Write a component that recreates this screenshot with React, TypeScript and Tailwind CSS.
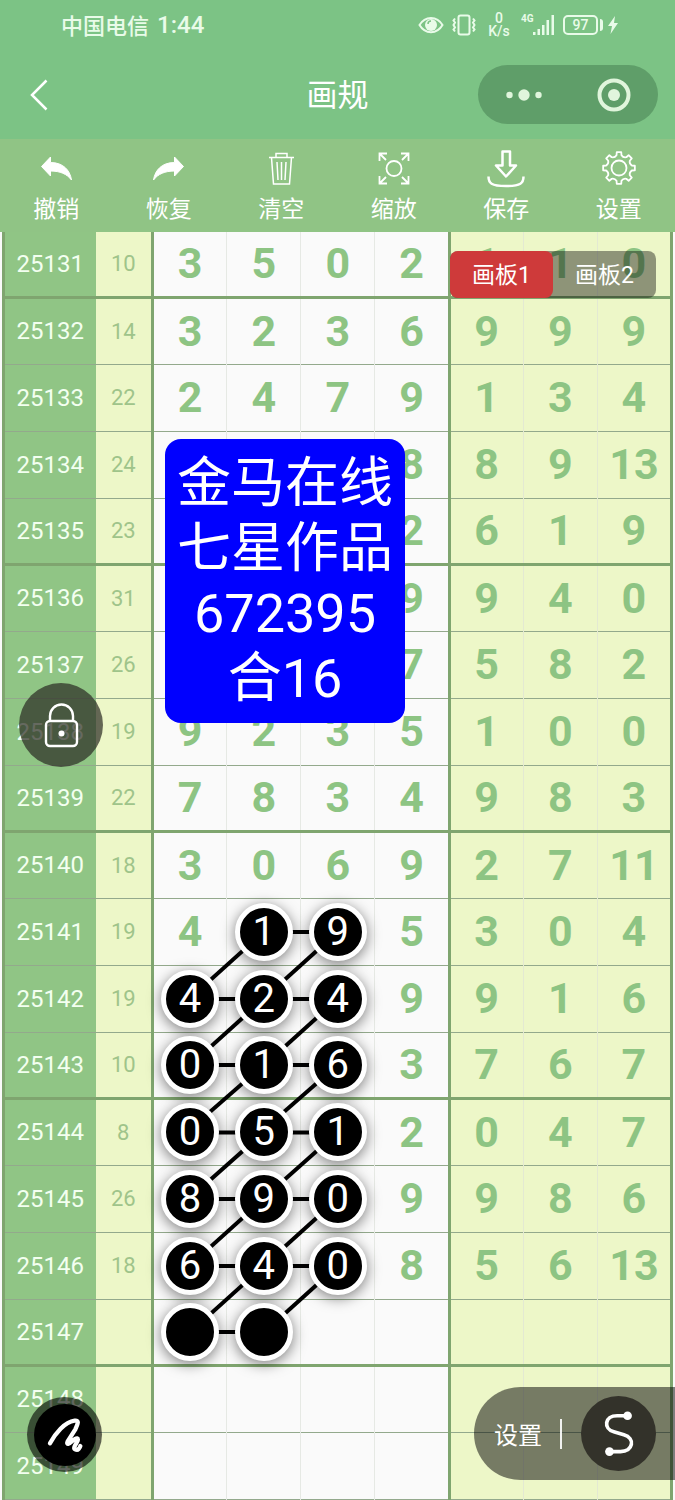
import type { ReactNode } from 'react';

type Cell = { value: string; marked?: boolean };
type Row = { issue: string; sum: string; main: Cell[]; extra: string[] };

// "*" in front of a digit marks the ball as picked
const RAW: [string, string, string, string][] = [
  ['25131', '10', '3 5 0 2', '1 1 0'],
  ['25132', '14', '3 2 3 6', '9 9 9'],
  ['25133', '22', '2 4 7 9', '1 3 4'],
  ['25134', '24', '- - - 8', '8 9 13'],
  ['25135', '23', '- - - 2', '6 1 9'],
  ['25136', '31', '- - - 9', '9 4 0'],
  ['25137', '26', '- - - 7', '5 8 2'],
  ['25138', '19', '9 2 3 5', '1 0 0'],
  ['25139', '22', '7 8 3 4', '9 8 3'],
  ['25140', '18', '3 0 6 9', '2 7 11'],
  ['25141', '19', '4 *1 *9 5', '3 0 4'],
  ['25142', '19', '*4 *2 *4 9', '9 1 6'],
  ['25143', '10', '*0 *1 *6 3', '7 6 7'],
  ['25144', '8', '*0 *5 *1 2', '0 4 7'],
  ['25145', '26', '*8 *9 *0 9', '9 8 6'],
  ['25146', '18', '*6 *4 *0 8', '5 6 13'],
  ['25147', '', '* * - -', '- - -'],
  ['25148', '', '- - - -', '- - -'],
  ['25149', '', '- - - -', '- - -'],
];

const clean = (s: string) => s.replace(/[*-]/g, '');

const ROWS: Row[] = RAW.map(([issue, sum, main, extra]) => ({
  issue,
  sum,
  main: main.split(' ').map(s => ({ value: clean(s), marked: s.startsWith('*') })),
  extra: extra.split(' ').map(clean),
}));

export default function App() {
  return (
    <div className="flex min-h-screen flex-col overflow-hidden bg-[#fafafa] font-[Roboto,'Noto_Sans_CJK_SC',sans-serif] text-white">
      <header className="bg-[#7cc385]">
        <StatusBar />
        <NavBar />
      </header>
      <Toolbar />

      <main className="relative flex-1 px-0.5">
        <DrawTable />

        {/* Board switch */}
        <div className="absolute top-[19px] right-[19px] flex h-[47px] w-[206px] rounded-lg bg-black/40 text-[23px]">
          <button className="flex-1 rounded-lg bg-[#ce3a3a] pt-1">画板1</button>
          <button className="flex-1 pt-1">画板2</button>
        </div>

        {/* Sticker text */}
        <div className="absolute top-[207px] left-[165px] rounded-2xl bg-[#0000ff] px-3 py-3 text-center text-[54px] leading-[65px] whitespace-nowrap">
          <p>金马在线</p>
          <p>七星作品</p>
          <p>672395</p>
          <p>合16</p>
        </div>

        <button
          aria-label="锁定"
          className="absolute top-[451px] left-[19px] flex size-[84px] items-center justify-center rounded-full bg-[#2a2a22]/70"
        >
          <svg viewBox="0 0 44 48" className="h-12 w-11" fill="none" stroke="#fff" strokeWidth="2.4">
            <rect x="7" y="20" width="31" height="25" rx="4" />
            <path d="M11 20v-5a11.5 11.5 0 0 1 23 0v5" />
            <circle cx="22.5" cy="32.5" r="3" fill="#fff" stroke="none" />
          </svg>
        </button>

        <button
          aria-label="画笔"
          className="absolute bottom-[28px] left-[27px] flex size-[75px] items-center justify-center rounded-full bg-black/60"
        >
          <span className="flex size-[62px] items-center justify-center rounded-full bg-black">
            <svg viewBox="0 0 186 186" className="size-[62px]" fill="none" stroke="#fff" strokeWidth="13" strokeLinecap="round" strokeLinejoin="round">
              <path d="M48 118C64 88 92 54 122 50C138 48 130 62 124 76L101 112C96 124 106 120 114 112C128 98 136 102 129 114C122 126 116 134 126 137C132 140 138 130 139 126" />
            </svg>
          </span>
        </button>

        <div className="absolute right-0 bottom-[20px] flex h-[93px] w-[201px] items-center rounded-l-full bg-black/50 pr-[19px] pl-5">
          <button className="pt-1 text-2xl">设置</button>
          <span className="ml-[18px] h-[30px] w-0.5 bg-white/90" />
          <button aria-label="连线" className="ml-auto size-[75px] rounded-full bg-[#33322a]">
            <svg viewBox="0 0 224 224" className="size-full" fill="none" stroke="#fff" strokeWidth="11" strokeLinecap="round">
              <path d="M138 59H108C70 59 66 98 98 107L128 116C163 126 156 166 118 166H86" />
              <circle cx="139" cy="59" r="13" fill="#fff" stroke="none" />
              <circle cx="85" cy="166" r="13" fill="#fff" stroke="none" />
            </svg>
          </button>
        </div>
      </main>
    </div>
  );
}

function StatusBar() {
  return (
    <div className="flex h-[50px] items-center justify-between pr-[56px] pl-[61px] text-[#e9fbe9]">
      <div className="flex items-center gap-2 font-medium">
        <span className="pt-0.5 text-[22px]">中国电信</span>
        <span className="text-2xl">1:44</span>
      </div>
      <div className="flex items-center">
        <svg viewBox="0 0 26 18" className="h-[18px] w-[26px]" fill="none" stroke="currentColor" strokeWidth="2">
          <path d="M1.5 9C7-.5 19-.5 24.500 9C19 18.500 7 18.500 1.500 9Z" />
          <circle cx="13" cy="9" r="6" fill="currentColor" stroke="none" />
          <path d="M10 8a3 3 0 0 1 3-3" stroke="#7cc385" strokeWidth="1.500" />
        </svg>
        <svg viewBox="0 0 26 22" className="ml-[7px] h-[22px] w-[26px]" fill="none" stroke="currentColor" strokeWidth="2">
          <rect x="7.500" y="1.500" width="11" height="19" rx="2" />
          <path d="M4 4.500L2.500 6.500L4 8.500L2.500 11L4 13.500L2.500 15.500L4 17.500M22 4.500L23.500 6.500L22 8.500L23.500 11L22 13.500L23.500 15.500L22 17.500" />
        </svg>
        <div className="ml-2.5 flex w-6 flex-col text-center text-sm leading-[13px] font-medium">
          <span>0</span>
          <span>K/s</span>
        </div>
        <div className="ml-2.5 flex">
          <span className="w-3 text-[10px] leading-none font-bold">4G</span>
          <svg viewBox="0 0 22 22" className="h-[22px] w-[22px]" fill="currentColor">
            <path d="M0 18h2.500v3H0zM4.500 15h2.500v6H4.500zM9 11h2.500v10H9zM13.500 6h2.500v15h-2.500zM18.500 1h2.500v20h-2.500z" />
          </svg>
        </div>
        <div className="ml-2 flex h-5 w-[35px] items-center justify-center rounded-[5px] border-2 border-current text-sm font-medium">97</div>
        <span className="ml-0.5 h-3 w-[3px] rounded-r-sm bg-current" />
        <svg viewBox="0 0 12 18" className="ml-1 h-[18px] w-3" fill="currentColor">
          <path d="M8 0L1 10h4L3.500 18L11 7H7z" />
        </svg>
      </div>
    </div>
  );
}

function NavBar() {
  return (
    <div className="grid h-[89px] grid-cols-[1fr_auto_1fr] items-center px-[17px]">
      <button aria-label="返回" className="justify-self-start pl-3">
        <svg viewBox="0 0 20 32" className="h-8 w-5" fill="none" stroke="#fff" strokeWidth="2.500">
          <path d="M17.500 1.500L3 16L17.500 30.500" />
        </svg>
      </button>
      <h1 className="pt-1 text-center text-[31px]">画规</h1>
      <div className="flex h-[59px] w-[180px] items-center justify-around justify-self-end rounded-full bg-[#5f9e69] text-[#e0f5dc]">
        <button aria-label="更多">
          <svg viewBox="0 0 38 12" className="h-3 w-[38px]" fill="currentColor">
            <circle cx="4.500" cy="6" r="3.200" />
            <circle cx="19" cy="6" r="5.700" />
            <circle cx="33.500" cy="6" r="3.200" />
          </svg>
        </button>
        <button aria-label="关闭">
          <svg viewBox="0 0 34 34" className="size-[34px]" fill="none" stroke="currentColor" strokeWidth="4">
            <circle cx="17" cy="17" r="14.500" />
            <circle cx="17" cy="17" r="6" fill="currentColor" stroke="none" />
          </svg>
        </button>
      </div>
    </div>
  );
}

// Eight teeth round a 20,20 centre
function gearPath() {
  const pt = (r: number, deg: number) => {
    const a = (deg * Math.PI) / 180;
    return `${(20 + r * Math.cos(a)).toFixed(2)} ${(20 + r * Math.sin(a)).toFixed(2)}`;
  };
  let d = '';
  for (let i = 0; i < 8; i++) {
    const a = i * 45 - 90;
    d += `${i ? 'L' : 'M'}${pt(13, a - 11)}L${pt(16, a - 8)}L${pt(16, a + 8)}L${pt(13, a + 11)}`;
    d += `Q${pt(11, a + 22.5)} ${pt(13, a + 34)}`;
  }
  return d + 'Z';
}

const ARROW = 'M5.500 18.500L14.500 9V14.500C27 14.500 34 22 35.500 32C31 26 24 23 14.500 23V28Z';

const TOOLS: { label: string; icon: ReactNode }[] = [
  { label: '撤销', icon: <path d={ARROW} fill="#fff" strokeWidth="1" /> },
  { label: '恢复', icon: <path d={ARROW} fill="#fff" strokeWidth="1" transform="matrix(-1 0 0 1 40 0)" /> },
  {
    label: '清空',
    icon: <path d="M8 9.500H33M15 9.500V5.500H26V9.500M10.500 9.500L12.500 36H28.500L30.500 9.500M16 14L17 32M20.500 14V32M25 14L24 32" strokeWidth="1.500" />,
  },
  {
    label: '缩放',
    icon: (
      <g strokeWidth="1.800">
        <circle cx="20" cy="20.500" r="7.500" />
        <path d="M5.500 13V5.500H13M5.500 5.500L12 12M27 5.500H34.500V13M34.500 5.500L28 12M5.500 28V35.500H13M5.500 35.500L12 29M27 35.500H34.500V28M34.500 35.500L28 29" />
      </g>
    ),
  },
  {
    label: '保存',
    icon: (
      <g strokeWidth="2.500" strokeLinejoin="round">
        <path d="M16.500 3.500H24V17.500H30L20 28.500L10 17.500H16.500Z" />
        <path d="M2.500 28.500C2.500 35 5 38 20 38S37.500 35 37.500 28.500" />
      </g>
    ),
  },
  {
    label: '设置',
    icon: (
      <g strokeWidth="1.800" strokeLinejoin="round">
        <path d={gearPath()} />
        <circle cx="20" cy="20" r="7.500" />
      </g>
    ),
  },
];

function Toolbar() {
  return (
    <nav className="grid h-[93px] grid-cols-6 bg-[#90c485]">
      {TOOLS.map(tool => (
        <button key={tool.label} className="flex flex-col items-center pt-[9px] text-[23px] leading-[44px]">
          <svg viewBox="0 0 40 40" className="size-10" fill="none" stroke="#fff">
            {tool.icon}
          </svg>
          <span>{tool.label}</span>
        </button>
      ))}
    </nav>
  );
}

function DrawTable() {
  return (
    <table className="w-full table-fixed border-collapse border-x-3 border-[#7fa56f] text-center">
      <colgroup>
        <col className="w-[92px] bg-[#90c585]" />
        <col className="w-[57px] bg-[#edf7c8]" />
        <col span={4} className="bg-[#fafafa]" />
        <col span={3} className="bg-[#edf7c8]" />
      </colgroup>
      <tbody>
        {ROWS.map((row, i) => (
          <tr
            key={row.issue}
            className={
              i === 0 ? 'h-[65px] border-b-3 border-[#7fa56f]' :
              i % 4 === 0 ? 'h-[66px] border-b-3 border-[#7fa56f]' : 'h-[67px] border-b border-[#93a98c]'
            }
          >
            <th className="p-0 text-2xl font-normal text-[#f3fff0]">{row.issue}</th>
            <td className="border-r-3 border-r-[#7fa56f] p-0 text-[22px] text-[#9fc48a]">{row.sum}</td>
            {row.main.map((cell, j) => (
              <td
                key={j}
                className={`p-0 text-[43px] leading-none font-bold text-[#8dc483] ${
                  j === 3 ? 'border-r-3 border-r-[#7fa56f]' : 'border-r border-r-[#e6e9e4]'
                } ${cell.marked ? 'relative' : ''}`}
              >
                {cell.marked ? <Ball row={i} col={j} value={cell.value} /> : cell.value}
              </td>
            ))}
            {row.extra.map((value, j) => (
              <td
                key={j}
                className={`p-0 text-[43px] leading-none font-bold text-[#8dc483] ${j < 2 ? 'border-r border-r-[#e3e9d2]' : ''}`}
              >
                {value}
              </td>
            ))}
          </tr>
        ))}
      </tbody>
    </table>
  );
}

// Picked ball, linked to its right and lower left neighbours
function Ball({ row, col, value }: { row: number; col: number; value: string }) {
  const right = ROWS[row].main[col + 1]?.marked;
  const lowerLeft = ROWS[row + 1]?.main[col - 1]?.marked;
  return (
    <>
      <svg className="absolute inset-0 z-10 size-full overflow-visible" stroke="#000" strokeWidth="4">
        {right && <line x1="50%" y1="50%" x2="150%" y2="50%" />}
        {lowerLeft && <line x1="50%" y1="50%" x2="-50%" y2="150%" />}
      </svg>
      <span className="relative z-20 mx-auto flex size-[58px] items-center justify-center rounded-full border-5 border-white bg-black text-[40px] font-normal text-white shadow-[0_3px_14px_rgba(0,0,0,0.5)]">
        {value}
      </span>
    </>
  );
}
